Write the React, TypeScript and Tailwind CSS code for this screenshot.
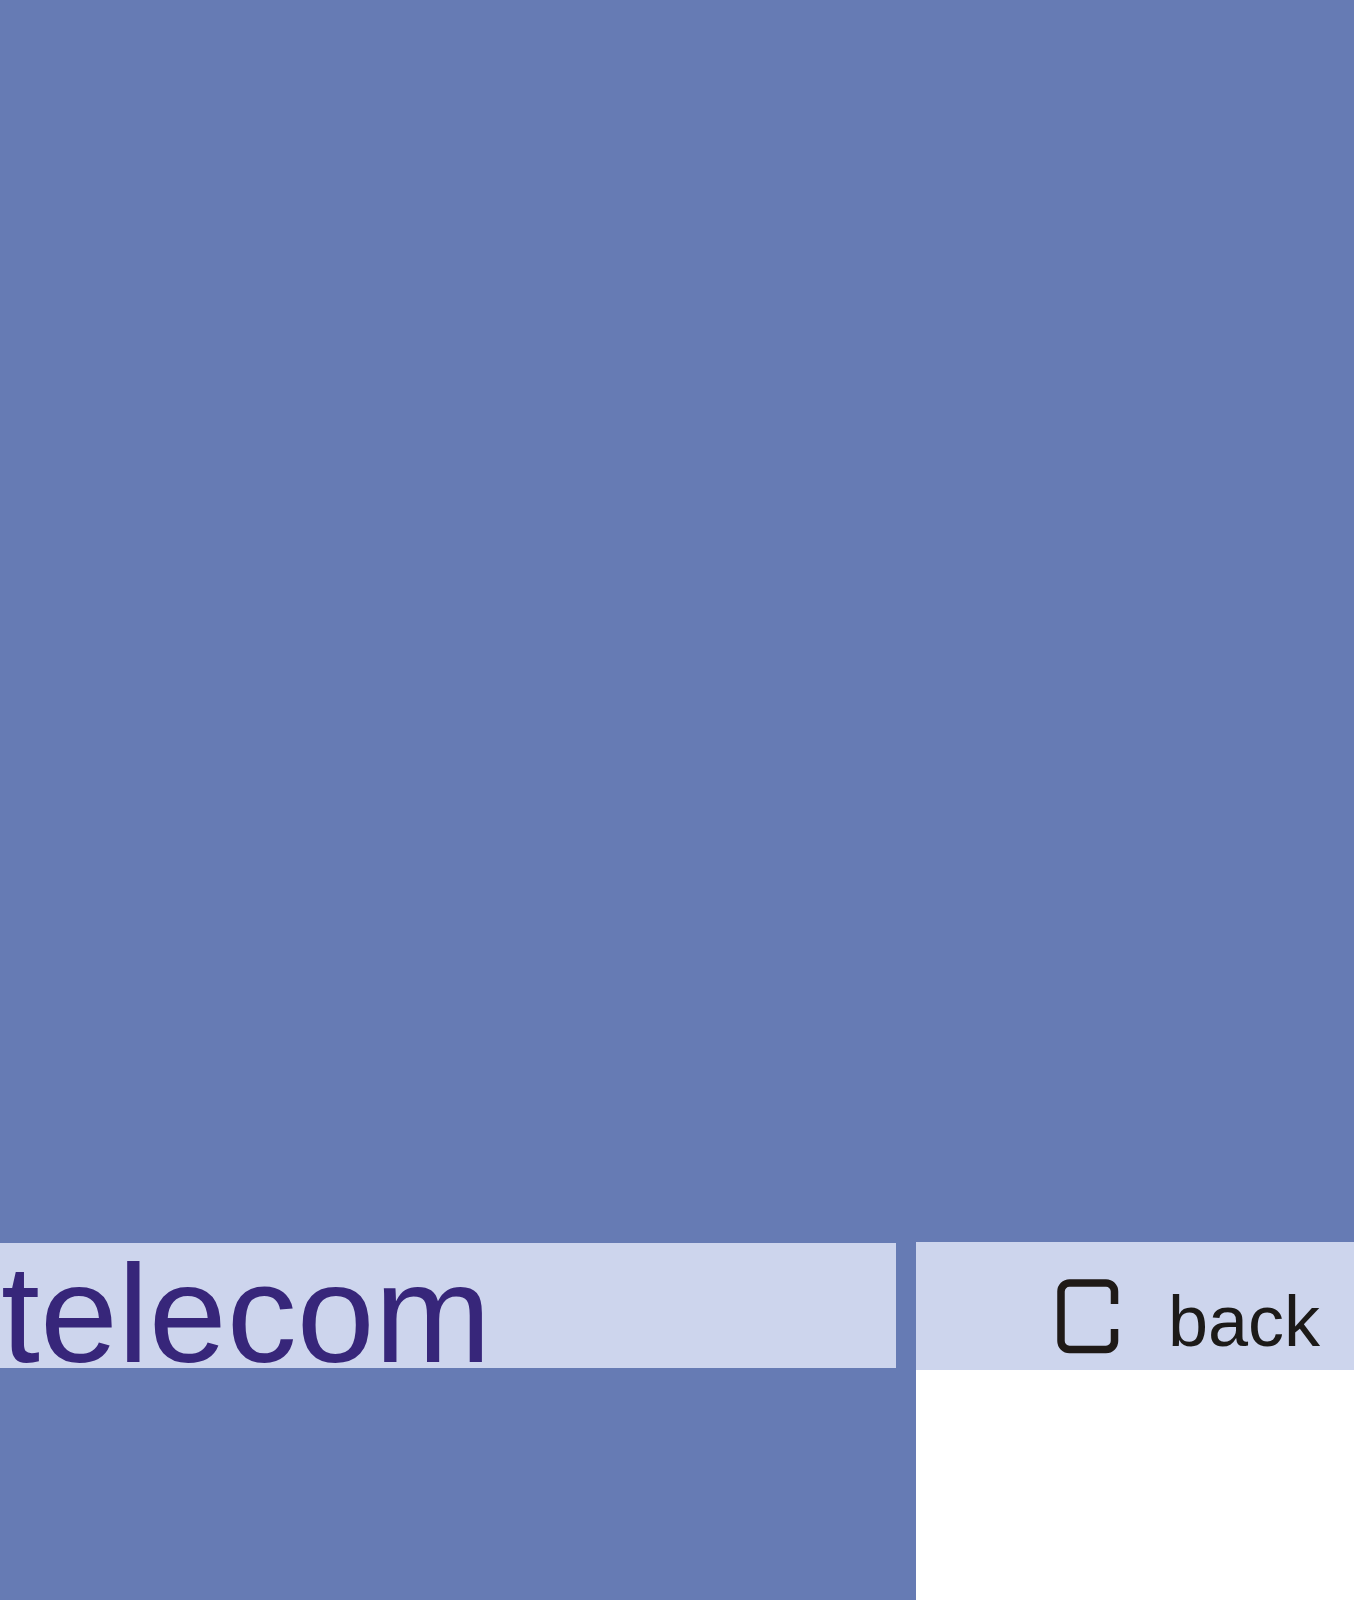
export default function App() {
  return (
    <div className="w-[1354px] h-[1600px] overflow-hidden bg-[#667bb4] font-['Liberation_Sans',Arial,sans-serif]">
      <div className="h-[1242px]" />
      <div className="flex h-[358px]">
        {/* title strip */}
        <div className="w-[916px] shrink-0">
          <div className="mt-[1px] h-[125px] w-[896px] bg-[#cdd5ed]">
            <div className="pt-[1px] pl-[1px] text-[140px] leading-none text-[#37267a] whitespace-nowrap">telecom</div>
          </div>
        </div>
        {/* back button */}
        <div className="flex flex-1 flex-col">
          <div className="flex h-[128px] items-start bg-[#cdd5ed] pl-[141px] pt-[37px]">
            <svg width="62" height="75" viewBox="0 0 62 75" className="shrink-0">
              <path
                d="M57.5 25 V12.5 a8.5 8.5 0 0 0 -8.5 -8.5 H12.5 a8.5 8.5 0 0 0 -8.5 8.5 V62 a8.5 8.5 0 0 0 8.5 8.5 H49 a8.5 8.5 0 0 0 8.5 -8.5 V50"
                fill="none"
                stroke="#1f1a17"
                strokeWidth="7.5"
              />
            </svg>
            <span className="ml-[49px] mt-[6px] text-[72px] leading-none text-[#1c1a18]">back</span>
          </div>
          <div className="flex-1 bg-white" />
        </div>
      </div>
    </div>
  )
}
